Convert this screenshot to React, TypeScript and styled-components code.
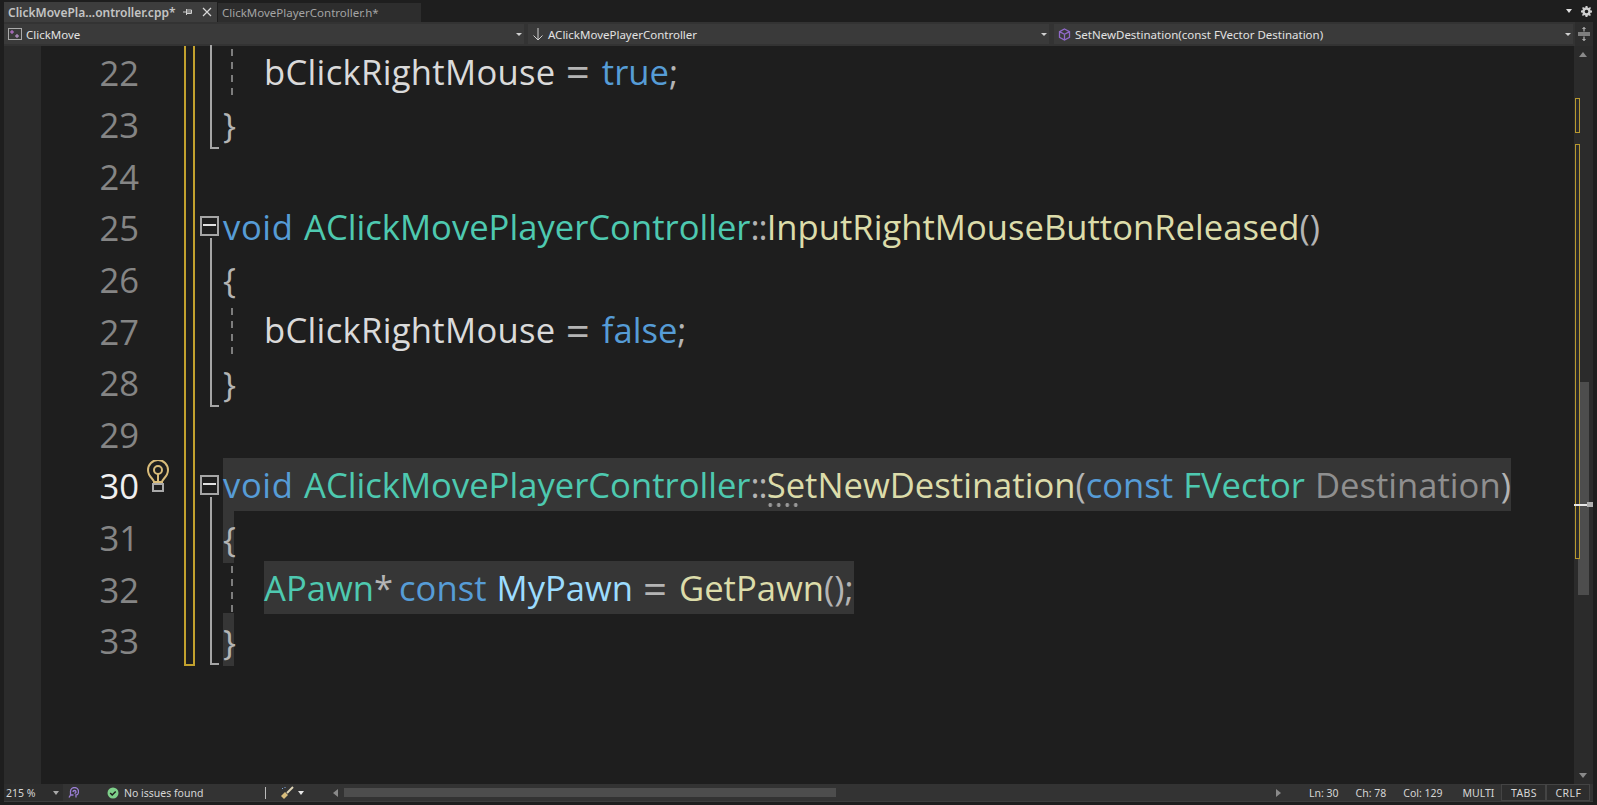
import React from "react";
import styled, { createGlobalStyle } from "styled-components";

const LINE_HEIGHT = 51.67;

const GlobalStyle = createGlobalStyle`
  html, body {
    margin: 0;
    padding: 0;
    height: 100%;
    background: #1e1e1e;
    overflow: hidden;
  }
`;

const Window = styled.div`
  width: 1597px;
  height: 805px;
  display: flex;
  flex-direction: column;
  background: #1e1e1e;
  color: #dcdcdc;
  font-family: "Noto Sans", "Open Sans", sans-serif;
`;

const TabRow = styled.div`
  height: 22px;
  flex: none;
  display: flex;
  align-items: flex-end;
  padding-left: 4px;
  padding-right: 5px;
`;

const Tab = styled.div<{ $active?: boolean }>`
  height: ${({ $active }) => ($active ? 20 : 19)}px;
  width: ${({ $active }) => ($active ? 213 : 203)}px;
  display: flex;
  align-items: center;
  padding-left: 4px;
  box-sizing: border-box;
  margin-left: ${({ $active }) => ($active ? 0 : 1)}px;
  background: ${({ $active }) => ($active ? "#3d3d3d" : "#2d2d2d")};
  color: ${({ $active }) => ($active ? "#c4c4c4" : "#a4a4a4")};
  font-size: ${({ $active }) => ($active ? 12 : 11.5)}px;
  font-weight: ${({ $active }) => ($active ? 600 : 400)};
  white-space: nowrap;
`;

const TabIcons = styled.div`
  margin-left: auto;
  display: flex;
  align-items: center;
  gap: 10px;
  padding-right: 5px;
`;

const TopRight = styled.div`
  margin-left: auto;
  height: 22px;
  display: flex;
  align-items: center;
  gap: 9px;
`;

const NavBar = styled.div`
  height: 24px;
  flex: none;
  margin: 0 4px;
  padding-top: 2px;
  box-sizing: border-box;
  display: flex;
  background: #333;
`;

const NavCell = styled.div<{ $w: number; $ml?: number }>`
  width: ${({ $w }) => $w}px;
  margin-left: ${({ $ml }) => $ml ?? 0}px;
  height: 20px;
  box-sizing: border-box;
  display: flex;
  align-items: center;
  gap: 4px;
  padding: 0 2px 0 4px;
  background: #3a3a3a;
  font-size: 11.5px;
  color: #e2e2e2;
  white-space: nowrap;
`;

const NavCaret = styled.div`
  margin-left: auto;
  width: 0;
  height: 0;
  border-left: 3.5px solid transparent;
  border-right: 3.5px solid transparent;
  border-top: 3.5px solid #d0d0d0;
`;

const SplitButton = styled.div`
  flex: 1;
  margin: -2px 0 0 2px;
  background: #2d2d2d;
  display: flex;
  align-items: center;
  justify-content: center;
`;

const EditorArea = styled.div`
  flex: none;
  height: 738px;
  display: flex;
`;

const LeftMargin = styled.div`
  width: 41px;
  flex: none;
  background: #2b2b2b;
  border-left: 4px solid #1e1e1e;
  box-sizing: border-box;
`;

const CodePane = styled.div`
  position: relative;
  flex: 1;
  min-width: 0;
`;

const LinesWrap = styled.div`
  margin-top: -0.6px;
`;

const ChangeTrack = styled.div`
  position: absolute;
  left: 143px;
  top: 0;
  width: 11px;
  height: 620px;
  box-sizing: border-box;
  border: 2px solid #c2a12e;
  border-top: none;
`;

const Line = styled.div`
  height: ${LINE_HEIGHT}px;
  display: flex;
  align-items: center;
  font-family: "Open Sans", "Noto Sans", sans-serif;
  font-size: 34.62px;
  word-spacing: 1px;
  white-space: pre;
`;

const LineNumber = styled.div<{ $current?: boolean }>`
  width: 98px;
  flex: none;
  padding-top: 3px;
  text-align: right;
  color: ${({ $current }) => ($current ? "#f0f0f0" : "#858585")};
`;

const Outline = styled.div`
  position: relative;
  width: 78px;
  flex: none;
  align-self: stretch;
`;

const FoldBox = styled.div`
  position: absolute;
  left: 61px;
  top: 16px;
  width: 19px;
  height: 20px;
  box-sizing: border-box;
  border: 2px solid #a5a5a5;
  background: #1e1e1e;
  &::after {
    content: "";
    position: absolute;
    left: 1px;
    top: 6px;
    width: 13px;
    height: 2px;
    background: #e0e0e0;
  }
`;

const FoldLine = styled.div<{ $end?: boolean; $start?: boolean }>`
  position: absolute;
  left: 71px;
  top: ${({ $start }) => ($start ? 38 : 0)}px;
  bottom: 0;
  width: ${({ $end }) => ($end ? 9 : 2)}px;
  box-sizing: border-box;
  border-left: 2px solid #a5a5a5;
  border-bottom: ${({ $end }) => ($end ? "2px solid #a5a5a5" : "none")};
`;

const Bulb = styled.svg`
  position: absolute;
  left: 7px;
  top: 1px;
`;

const Content = styled.div<{ $indent?: boolean }>`
  position: relative;
  flex: 1;
  align-self: stretch;
  display: flex;
  align-items: center;
  margin-left: 6px;
  padding-left: ${({ $indent }) => ($indent ? 41 : 0)}px;
`;

const Guide = styled.div`
  position: absolute;
  left: 8px;
  top: 4px;
  bottom: 0;
  width: 2px;
  background: repeating-linear-gradient(to bottom, #7d7d7d 0 7px, transparent 7px 13px);
`;

const Highlight = styled.span<{ $on?: boolean }>`
  display: inline-flex;
  align-items: center;
  height: ${LINE_HEIGHT + 1.5}px;
  background: ${({ $on }) => ($on ? "#363636" : "transparent")};
`;

const Tok = styled.span<{ $c: string }>`
  color: ${({ $c }) => $c};
`;

const Member = styled(Tok)`
  letter-spacing: 0.3px;
`;

const Keyword = styled(Tok)`
  letter-spacing: 0.6px;
`;

const Scope = styled(Tok)`
  letter-spacing: -1px;
`;

const Star = styled(Tok)`
  letter-spacing: -2px;
`;

const Equals = styled(Tok)`
  font-size: 42px;
  line-height: 0;
`;

const Brace = styled(Tok)`
  letter-spacing: -2px;
  padding-top: 4px;
`;

const Dots = styled.span`
  position: relative;
  &::after {
    content: "";
    position: absolute;
    left: -0.5px;
    bottom: 1px;
    width: 34px;
    height: 4px;
    background: radial-gradient(circle, #999 1.7px, transparent 2.1px) 0 0 / 8.5px 4px repeat-x;
  }
`;

const Scrollbar = styled.div`
  position: relative;
  width: 19px;
  flex: none;
  margin-right: 4px;
  background: #2b2b2b;
`;

const ScrollArrow = styled.div<{ $down?: boolean }>`
  position: absolute;
  left: 5px;
  width: 0;
  height: 0;
  border-left: 4.5px solid transparent;
  border-right: 4.5px solid transparent;
  ${({ $down }) =>
    $down
      ? "bottom: 6px; border-top: 5px solid #8a8a8a;"
      : "top: 6px; border-bottom: 5px solid #8a8a8a;"}
`;

const ScrollThumb = styled.div`
  position: absolute;
  left: 4px;
  right: 4px;
  top: 336px;
  height: 213px;
  background: #4d4d4d;
`;

const MapMark = styled.div<{ $top: number; $h: number }>`
  position: absolute;
  left: 1px;
  top: ${({ $top }) => $top}px;
  height: ${({ $h }) => $h}px;
  width: 5px;
  box-sizing: border-box;
  border: 1px solid #b8992f;
  background: #2b2b2b;
`;

const Caret = styled.div`
  position: absolute;
  left: 0;
  right: 0;
  top: 458px;
  height: 2px;
  background: #e6e6e6;
  &::after {
    content: "";
    position: absolute;
    right: 0;
    top: -2px;
    width: 6px;
    height: 5px;
    background: #b0b0b0;
  }
`;

const StatusBar = styled.div`
  height: 18px;
  flex: none;
  margin: 0 4px;
  display: flex;
  align-items: center;
  font-size: 10.5px;
  color: #d6d6d6;
  background: #333;
  border-bottom: 1px solid #3d3d3d;
  box-sizing: border-box;
  white-space: nowrap;
`;

const ZoomBox = styled.div`
  width: 59px;
  height: 100%;
  flex: none;
  padding-left: 2px;
  box-sizing: border-box;
  background: #2d2d2d;
  display: flex;
  align-items: center;
`;

const SmallCaret = styled.div<{ $c?: string; $ml?: number }>`
  margin-left: ${({ $ml }) => $ml ?? 0}px;
  width: 0;
  height: 0;
  border-left: 3.5px solid transparent;
  border-right: 3.5px solid transparent;
  border-top: 4px solid ${({ $c }) => $c ?? "#aaa"};
`;

const HeadIcon = styled.svg`
  margin-left: 5px;
  flex: none;
`;

const Issues = styled.div`
  margin-left: 28px;
  width: 158px;
  flex: none;
  display: flex;
  align-items: center;
  gap: 5px;
`;

const Divider = styled.div`
  width: 1px;
  height: 12px;
  background: #bbb;
`;

const BroomIcon = styled.svg`
  margin-left: 14px;
  flex: none;
`;

const HScroll = styled.div`
  margin-left: 29px;
  width: 948px;
  flex: none;
  height: 100%;
  display: flex;
  align-items: center;
`;

const HArrow = styled.div<{ $right?: boolean }>`
  width: 0;
  height: 0;
  border-top: 4.5px solid transparent;
  border-bottom: 4.5px solid transparent;
  ${({ $right }) =>
    $right
      ? "border-left: 5px solid #8a8a8a; margin-left: auto;"
      : "border-right: 5px solid #8a8a8a;"}
`;

const HThumb = styled.div`
  margin-left: 6px;
  width: 492px;
  height: 9px;
  background: #4d4d4d;
`;

const StatusItem = styled.div<{ $ml: number }>`
  margin-left: ${({ $ml }) => $ml}px;
`;

const BoxItem = styled.div<{ $w: number; $ml?: number }>`
  width: ${({ $w }) => $w}px;
  margin-left: ${({ $ml }) => $ml ?? 0}px;
  height: 100%;
  flex: none;
  box-sizing: border-box;
  border: 1px solid #444;
  background: #2d2d2d;
  display: flex;
  align-items: center;
  justify-content: center;
  letter-spacing: 0.4px;
`;

const C = {
  kw: "#569cd6",
  type: "#4ec9b0",
  fn: "#dcdcaa",
  mem: "#dadada",
  var: "#9cdcfe",
  param: "#8f8f8f",
  punct: "#b4b4b4",
};

const CodeLines = () => (
  <LinesWrap>
    <Line>
      <LineNumber>22</LineNumber>
      <Outline><FoldLine /></Outline>
      <Content $indent>
        <Guide />
        <Member $c={C.mem}>bClickRightMouse </Member><Equals $c={C.punct}>= </Equals><Tok $c={C.kw}>true</Tok><Tok $c={C.punct}>;</Tok>
      </Content>
    </Line>
    <Line>
      <LineNumber>23</LineNumber>
      <Outline><FoldLine $end /></Outline>
      <Content><Brace $c={C.punct}>{"}"}</Brace></Content>
    </Line>
    <Line>
      <LineNumber>24</LineNumber>
    </Line>
    <Line>
      <LineNumber>25</LineNumber>
      <Outline><FoldBox /><FoldLine $start /></Outline>
      <Content>
        <Keyword $c={C.kw}>void </Keyword>
        <Tok $c={C.type}>AClickMovePlayerController</Tok>
        <Scope $c={C.punct}>::</Scope>
        <Tok $c={C.fn}>InputRightMouseButtonReleased</Tok>
        <Tok $c={C.punct}>()</Tok>
      </Content>
    </Line>
    <Line>
      <LineNumber>26</LineNumber>
      <Outline><FoldLine /></Outline>
      <Content><Brace $c={C.punct}>{"{"}</Brace></Content>
    </Line>
    <Line>
      <LineNumber>27</LineNumber>
      <Outline><FoldLine /></Outline>
      <Content $indent>
        <Guide />
        <Member $c={C.mem}>bClickRightMouse </Member><Equals $c={C.punct}>= </Equals><Tok $c={C.kw}>false</Tok><Tok $c={C.punct}>;</Tok>
      </Content>
    </Line>
    <Line>
      <LineNumber>28</LineNumber>
      <Outline><FoldLine $end /></Outline>
      <Content><Brace $c={C.punct}>{"}"}</Brace></Content>
    </Line>
    <Line>
      <LineNumber>29</LineNumber>
    </Line>
    <Line>
      <LineNumber $current>30</LineNumber>
      <Outline>
        <Bulb width="24" height="33" viewBox="0 0 24 33" fill="none" stroke="#d9bc7a" strokeWidth="2">
          <path d="M8 22c0-3-6-5-6-12a10 10 0 0 1 20 0c0 7-6 9-6 12z" />
          <circle cx="12" cy="10" r="4" />
          <path d="M12 14v8" />
          <rect x="7" y="24" width="10" height="7" stroke="#a9a9a9" />
        </Bulb>
        <FoldBox />
        <FoldLine $start />
      </Outline>
      <Content>
        <Highlight $on>
          <Keyword $c={C.kw}>void </Keyword>
          <Tok $c={C.type}>AClickMovePlayerController</Tok>
          <Scope $c={C.punct}>::</Scope>
          <Dots><Tok $c={C.fn}>SetNewDestination</Tok></Dots>
          <Tok $c={C.punct}>(</Tok>
          <Tok $c={C.kw}>const </Tok>
          <Tok $c={C.type}>FVector </Tok>
          <Tok $c={C.param}>Destination</Tok>
          <Tok $c={C.punct}>)</Tok>
        </Highlight>
      </Content>
    </Line>
    <Line>
      <LineNumber>31</LineNumber>
      <Outline><FoldLine /></Outline>
      <Content><Highlight $on><Brace $c={C.punct}>{"{"}</Brace></Highlight></Content>
    </Line>
    <Line>
      <LineNumber>32</LineNumber>
      <Outline><FoldLine /></Outline>
      <Content $indent>
        <Guide />
        <Highlight $on>
          <Tok $c={C.type}>APawn</Tok>
          <Star $c={C.punct}>* </Star>
          <Tok $c={C.kw}>const </Tok>
          <Tok $c={C.var}>MyPawn </Tok>
          <Equals $c={C.punct}>= </Equals>
          <Tok $c={C.fn}>GetPawn</Tok>
          <Tok $c={C.punct}>();</Tok>
        </Highlight>
      </Content>
    </Line>
    <Line>
      <LineNumber>33</LineNumber>
      <Outline><FoldLine $end /></Outline>
      <Content><Highlight $on><Brace $c={C.punct}>{"}"}</Brace></Highlight></Content>
    </Line>
  </LinesWrap>
);

export default function App() {
  return (
    <Window>
      <GlobalStyle />
      <TabRow>
        <Tab $active>
          ClickMovePla...ontroller.cpp*
          <TabIcons>
            <svg width="9" height="10" viewBox="0 0 9 10" stroke="#d0d0d0" fill="none">
              <path d="M0 5h3M3.500 2v6M3.500 3h5v3.500h-5M3.500 5h5" />
            </svg>
            <svg width="10" height="10" viewBox="0 0 10 10" stroke="#d8d8d8" strokeWidth="1.2">
              <path d="M1 1l8 8M9 1l-8 8" />
            </svg>
          </TabIcons>
        </Tab>
        <Tab>ClickMovePlayerController.h*</Tab>
        <TopRight>
          <SmallCaret $c="#e0e0e0" />
          <svg width="11" height="11" viewBox="0 0 12 12" fill="#d0d0d0">
            <path fillRule="evenodd" d="M5 0h2l.3 1.600 1.200.5L9.900 1.200l1 1-.9 1.400.5 1.200L12 5v2l-1.600.3-.5 1.200.9 1.400-1 1-1.400-.9-1.200.5L7 12H5l-.3-1.600-1.200-.5-1.400.9-1-1 .9-1.400-.5-1.200L0 7V5l1.600-.3.5-1.200-.9-1.400 1-1 1.400.9 1.200-.5zM6 4a2 2 0 1 0 0 4 2 2 0 0 0 0-4z" />
          </svg>
        </TopRight>
      </TabRow>
      <NavBar>
        <NavCell $w={520}>
          <svg width="14" height="12" viewBox="0 0 14 12" fill="none">
            <rect x="0.5" y="0.5" width="13" height="11" stroke="#aaa" />
            <path d="M2 4h4M4 2v4" stroke="#c678dd" />
            <path d="M7 8h4M9 6v4" stroke="#c9a0dc" />
          </svg>
          ClickMove
          <NavCaret />
        </NavCell>
        <NavCell $w={521} $ml={4}>
          <svg width="12" height="14" viewBox="0 0 12 14" fill="none" stroke="#d0d0d0">
            <path d="M6 1v12M1.500 8.500L6 13l4.500-4.500" />
          </svg>
          AClickMovePlayerController
          <NavCaret />
        </NavCell>
        <NavCell $w={519} $ml={5}>
          <svg width="13" height="13" viewBox="0 0 13 13" fill="none" stroke="#9069c9" strokeWidth="1.300">
            <path d="M6.500 1l5 2.600v5.800l-5 2.600-5-2.600V3.600zM1.500 3.600l5 2.700 5-2.700M6.500 6.300V12" />
          </svg>
          SetNewDestination(const FVector Destination)
          <NavCaret />
        </NavCell>
        <SplitButton>
          <svg width="12" height="14" viewBox="0 0 12 14" fill="none" stroke="#d0d0d0">
            <path d="M0 6h12M0 8h12M6 0.500v4M6 9.500v4M4.500 2L6 0.500 7.500 2M4.500 12L6 13.500 7.500 12" />
          </svg>
        </SplitButton>
      </NavBar>
      <EditorArea>
        <LeftMargin />
        <CodePane>
          <ChangeTrack />
          <CodeLines />
        </CodePane>
        <Scrollbar>
          <ScrollArrow />
          <ScrollThumb />
          <MapMark $top={52} $h={35} />
          <MapMark $top={98} $h={415} />
          <Caret />
          <ScrollArrow $down />
        </Scrollbar>
      </EditorArea>
      <StatusBar>
        <ZoomBox>
          215 %
          <SmallCaret $ml={18} />
        </ZoomBox>
        <HeadIcon width="11" height="11" viewBox="0 0 11 11" fill="none" stroke="#9b7fd6" strokeWidth="1.300">
          <path d="M1 10.500l1.500-2.500V4.500a4 4 0 0 1 8 0c0 2.500-1 3.500-2.500 3.500v2.500M2.500 8h3" />
          <path d="M5 5a1.500 1.500 0 1 1 3 0c0 1-1 1-1.500 1.500" />
        </HeadIcon>
        <Issues>
          <svg width="12" height="12" viewBox="0 0 12 12">
            <circle cx="6" cy="6" r="5.500" fill="#7ed08a" />
            <path d="M3.200 6l2 2 3.500-3.500" stroke="#1e1e1e" strokeWidth="1.500" fill="none" />
          </svg>
          No issues found
        </Issues>
        <Divider />
        <BroomIcon width="14" height="14" viewBox="0 0 14 14" fill="none">
          <path d="M13 1L7 7" stroke="#e0d6b8" strokeWidth="2" />
          <path d="M5 6l3 3-4 4-3-3z" fill="#d8bd7c" />
          <path d="M2 2l1 1M5 1v1" stroke="#7fa8e0" />
        </BroomIcon>
        <SmallCaret $c="#e6e6e6" $ml={4} />
        <HScroll>
          <HArrow />
          <HThumb />
          <HArrow $right />
        </HScroll>
        <StatusItem $ml={28}>Ln: 30</StatusItem>
        <StatusItem $ml={17}>Ch: 78</StatusItem>
        <StatusItem $ml={17}>Col: 129</StatusItem>
        <StatusItem $ml={20}>MULTI</StatusItem>
        <BoxItem $w={45} $ml={7}>TABS</BoxItem>
        <BoxItem $w={44}>CRLF</BoxItem>
      </StatusBar>
    </Window>
  );
}
